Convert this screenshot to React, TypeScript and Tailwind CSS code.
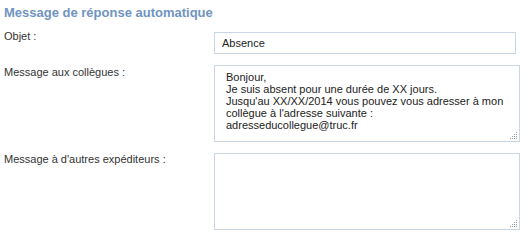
function Grip() {
  const dots: [number, number][] = [];
  for (let r = 0; r < 4; r++) {
    for (let c = 3 - r; c < 4; c++) {
      dots.push([c * 2, r * 2]);
    }
  }
  return (
    <svg width="8" height="8" viewBox="0 0 8 8" className="absolute right-[2px] bottom-[2px] pointer-events-none">
      {dots.map(([x, y]) => (
        <rect key={`${x}-${y}`} x={x} y={y} width="1" height="1" fill="#9a9a9a" />
      ))}
    </svg>
  );
}

function Area({ value }: { value?: string }) {
  return (
    <div className="relative w-[306px] h-[77px]">
      <textarea
        defaultValue={value}
        className="block w-full h-full resize-none border border-[#c8d6e5] pl-[11px] pr-[8px] pt-[5px] text-[11px] leading-[12px] text-[#222] outline-none"
      />
      <Grip />
    </div>
  );
}

export default function App() {
  return (
    <div className="w-[525px] h-[238px] bg-white pl-[4px] pt-[5px] font-['Liberation_Sans',Arial,sans-serif] text-[11px] text-[#333]">
      <h2 className="text-[13px] font-bold text-[#6f94c2] leading-[15px]">Message de réponse automatique</h2>

      <div className="mt-[12px] flex flex-col gap-[11px]">
        {/* Objet */}
        <div className="flex items-start">
          <label className="w-[210px] leading-[13px] mt-[-2px]">Objet :</label>
          <input
            type="text"
            defaultValue="Absence"
            className="w-[302px] h-[22px] border border-[#c8d6e5] px-[7px] text-[11px] text-[#222] outline-none"
          />
        </div>

        {/* Message aux collègues */}
        <div className="flex items-start">
          <label className="w-[210px] leading-[13px] pt-[1px]">Message aux collègues :</label>
          <Area
            value={"Bonjour,\nJe suis absent pour une durée de XX jours.\nJusqu'au XX/XX/2014 vous pouvez vous adresser à mon collègue à l'adresse suivante :\nadresseducollegue@truc.fr"}
          />
        </div>

        {/* Message à d'autres expéditeurs */}
        <div className="flex items-start">
          <label className="w-[210px] leading-[13px]">Message à d'autres expéditeurs :</label>
          <Area />
        </div>
      </div>
    </div>
  );
}
